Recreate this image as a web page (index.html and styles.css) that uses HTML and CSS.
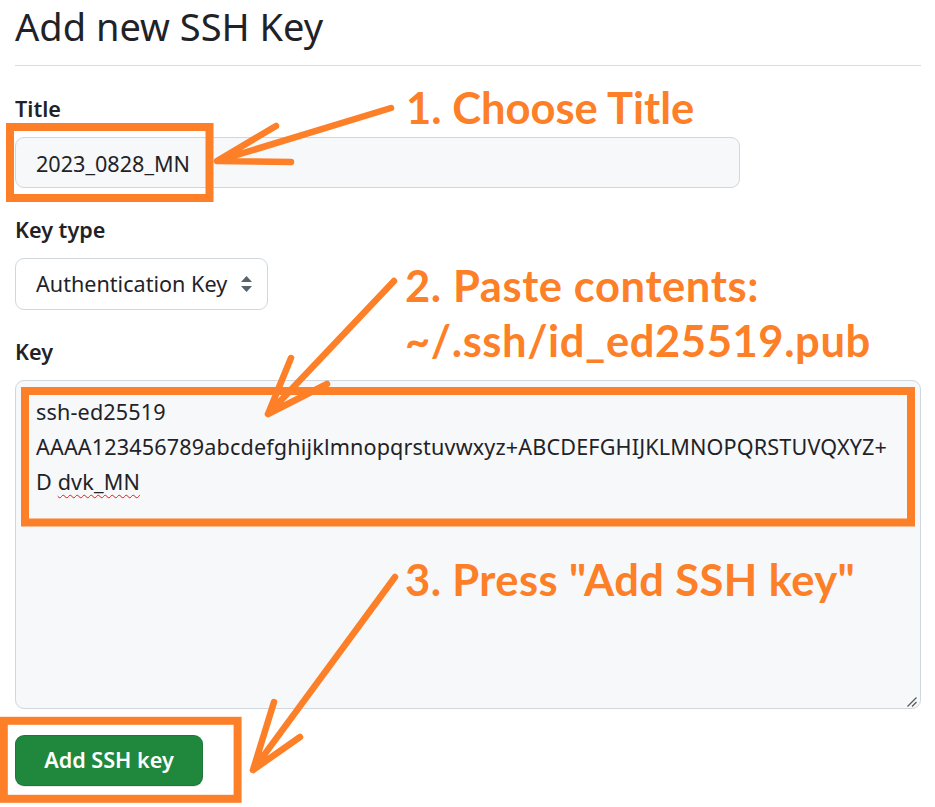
FILE: index.html
```html
<!DOCTYPE html>
<html lang="en">
<head>
<meta charset="utf-8">
<title>Add new SSH Key</title>
<link rel="stylesheet" href="styles.css">
</head>
<body>
<div class="page">
  <h2 class="subhead">Add new SSH Key</h2>
  <form class="form">
    <div class="field">
      <label class="label">Title</label>
      <div class="input">2023_0828_MN</div>
    </div>
    <div class="field">
      <label class="label">Key type</label>
      <div class="select">
        <span>Authentication Key</span>
        <svg class="caret" width="11" height="16" viewBox="0 0 11 16"><path d="M5.5 0 L11 6 L0 6 Z M0 10 L11 10 L5.5 16 Z" fill="#59636e"/></svg>
      </div>
    </div>
    <div class="field">
      <label class="label">Key</label>
      <div class="textarea">
        <div class="line">ssh-ed25519</div>
        <div class="line">AAAA123456789abcdefghijklmnopqrstuvwxyz+ABCDEFGHIJKLMNOPQRSTUVQXYZ+</div>
        <div class="line">D <span class="misspelled">dvk_MN</span></div>
        <svg class="grip" width="10" height="10" viewBox="0 0 10 10"><path d="M0.5 9.5 L9.5 0.5 M5 9.5 L9.5 5" stroke="#5a5a5a" stroke-width="1.3" fill="none"/></svg>
      </div>
    </div>
    <button class="btn" type="button">Add SSH key</button>
  </form>

  <svg class="annotations" width="935" height="807" viewBox="0 0 935 807">
    <g fill="none" stroke="#fd7f28" stroke-width="8">
      <rect x="10" y="127" width="199.5" height="71"/>
      <rect x="25" y="391" width="886" height="131.5"/>
      <rect x="3.8" y="720.8" width="233.8" height="78"/>
    </g>
    <g fill="none" stroke="#fd7f28" stroke-width="6.5" stroke-linecap="round" stroke-linejoin="round">
      <path d="M391 108 L217 161 M276 126 L217 161 L291 162"/>
      <path d="M394 281 L268 414 M291 358 L268 414 L327 384"/>
      <path d="M395 577 L253 770 M274 702 L253 770 L300 737"/>
    </g>
  </svg>
  <div class="note note-1">1. Choose Title</div>
  <div class="note note-2">2. Paste contents:<br>~/.ssh/id_ed25519.pub</div>
  <div class="note note-3">3. Press "Add SSH key"</div>
</div>
</body>
</html>
```

FILE: styles.css
```css
* {
  box-sizing: border-box;
}

body {
  margin: 0;
  background: #ffffff;
  font-family: "Noto Sans", "Open Sans", sans-serif;
  color: #1f2328;
}

.page {
  position: relative;
  width: 935px;
  height: 807px;
  padding: 0 14px 0 15px;
}

.subhead {
  margin: 0;
  font-size: 38px;
  font-weight: 400;
  line-height: 48px;
  padding-top: 1.6px;
  padding-bottom: 15.4px;
  border-bottom: 1px solid #d8dee4;
}

.form {
  display: flex;
  flex-direction: column;
  gap: 26px;
  margin-top: 27px;
}

.field {
  display: flex;
  flex-direction: column;
  align-items: flex-start;
  gap: 12px;
}

.label {
  font-size: 21.6px;
  font-weight: 600;
  line-height: 32px;
}

.input {
  width: 725px;
  height: 51px;
  padding: 4px 20px 0;
  display: flex;
  align-items: center;
  background: #f6f8fa;
  border: 1px solid #d0d7de;
  border-radius: 9px;
  font-size: 21.6px;
  line-height: 32px;
}

.select {
  width: 253px;
  height: 52px;
  padding: 1px 15px 0 20px;
  display: flex;
  align-items: center;
  justify-content: space-between;
  background: #ffffff;
  border: 1px solid #d0d7de;
  border-radius: 9px;
  font-size: 21.6px;
  line-height: 32px;
}

.caret {
  display: block;
  margin-top: -1px;
}

.textarea {
  position: relative;
  width: 100%;
  height: 329px;
  padding: 13px 20px;
  background: #f6f8fa;
  border: 1px solid #d0d7de;
  border-radius: 9px;
  font-size: 21.6px;
  line-height: 35px;
  letter-spacing: 0.15px;
}

.line {
  white-space: nowrap;
}

.misspelled {
  text-decoration-line: underline;
  text-decoration-style: wavy;
  text-decoration-color: #e51c1c;
  text-decoration-thickness: 1px;
  text-underline-offset: 4px;
}

.grip {
  position: absolute;
  right: 3px;
  bottom: 1px;
}

.btn {
  margin-top: 0;
  align-self: flex-start;
  width: 188px;
  height: 51px;
  padding: 0;
  display: flex;
  align-items: center;
  justify-content: center;
  background: #1f883d;
  color: #ffffff;
  border: 1px solid rgba(31, 35, 40, 0.15);
  border-radius: 9px;
  font-family: "Noto Sans", "Open Sans", sans-serif;
  font-size: 21.6px;
  font-weight: 600;
  line-height: 32px;
  box-shadow: 0 1px 0 rgba(31, 35, 40, 0.1);
}

.annotations {
  position: absolute;
  left: 0;
  top: 0;
  pointer-events: none;
}

.note {
  position: absolute;
  font-family: Lato, "Noto Sans", sans-serif;
  font-weight: 700;
  font-size: 43.5px;
  line-height: 43px;
  color: #fd7f28;
  white-space: nowrap;
}

.note-1 {
  left: 406px;
  top: 86px;
}

.note-2 {
  left: 405px;
  top: 258px;
  line-height: 55px;
  letter-spacing: 0.6px;
}

.note-3 {
  left: 405px;
  top: 558px;
  letter-spacing: 0.4px;
}
```
